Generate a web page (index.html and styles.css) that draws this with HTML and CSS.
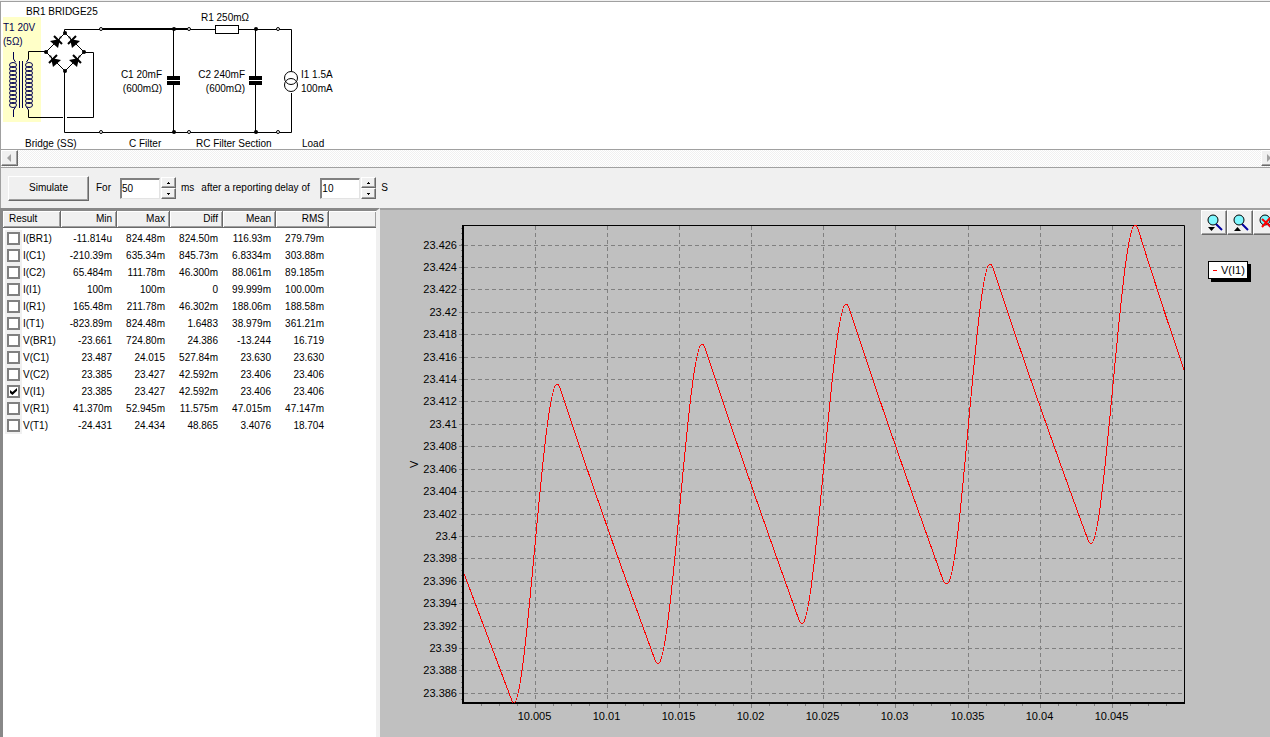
FILE: index.html
```html
<!DOCTYPE html>
<html lang="en">
<head>
<meta charset="utf-8">
<title>Power supply simulator</title>
<link rel="stylesheet" href="styles.css">
</head>
<body>
<main class="app">
  <section class="schematic" aria-label="Circuit">
    <svg class="circuit" width="345" height="147" viewBox="1 2 345 147">
      <rect class="pick" x="3" y="17" width="38" height="105"/>
      <g class="label">
        <text x="26" y="15">BR1 BRIDGE25</text>
        <text class="blue" x="3" y="31">T1 20V</text>
        <text class="blue" x="3" y="45">(5Ω)</text>
        <text x="201" y="21">R1 250mΩ</text>
        <text class="end" x="162" y="78">C1 20mF</text>
        <text class="end" x="162" y="92">(600mΩ)</text>
        <text class="end" x="245" y="78">C2 240mF</text>
        <text class="end" x="245" y="92">(600mΩ)</text>
        <text x="301" y="78">I1 1.5A</text>
        <text x="301" y="92">100mA</text>
        <text x="25" y="147">Bridge (SS)</text>
        <text x="129" y="147">C Filter</text>
        <text x="196" y="147">RC Filter Section</text>
        <text x="302" y="147">Load</text>
      </g>
      <g class="coil">
        <path d="M13.500 52v7l2 3M13.500 117v-7l2-3M28.500 59l-2 3M28.500 110l-2-3M19.500 61v47M22.500 61v47"/>
        <g id="left-coil">
          <ellipse cx="13" cy="65" rx="3.500" ry="2.500"/><ellipse cx="13" cy="69" rx="3.500" ry="2.500"/><ellipse cx="13" cy="73" rx="3.500" ry="2.500"/><ellipse cx="13" cy="77" rx="3.500" ry="2.500"/><ellipse cx="13" cy="81" rx="3.500" ry="2.500"/><ellipse cx="13" cy="85" rx="3.500" ry="2.500"/><ellipse cx="13" cy="89" rx="3.500" ry="2.500"/><ellipse cx="13" cy="93" rx="3.500" ry="2.500"/><ellipse cx="13" cy="97" rx="3.500" ry="2.500"/><ellipse cx="13" cy="101" rx="3.500" ry="2.500"/><ellipse cx="13" cy="105" rx="3.500" ry="2.500"/>
        </g>
        <use href="#left-coil" x="16"/>
      </g>
      <g class="wire">
        <path d="M28.500 59v-7.500H46M28.500 110v7.500H63M67 117.500H93.500V52.500H84M64.500 33V29.500H100M64.500 71V132.500H291.500V93M102 28.500H190M102 29.500H215M239 29.500H291.500V71M173.500 29v48M173.500 84v48M255.500 29v48M255.500 84v48"/>
        <path d="M65 33L46 52L65 71L84 52Z"/>
        <rect class="paper" x="215.500" y="25.500" width="23" height="8"/>
        <ellipse class="paper" cx="291" cy="78" rx="6.500" ry="6.500"/>
        <ellipse class="hollow" cx="291" cy="85" rx="6.500" ry="6.500"/>
        <circle class="paper" cx="101" cy="29" r="1.500"/><circle class="paper" cx="101" cy="132" r="1.500"/>
        <circle class="paper" cx="189" cy="29" r="1.500"/><circle class="paper" cx="189" cy="132" r="1.500"/>
        <circle class="paper" cx="278" cy="29" r="1.500"/><circle class="paper" cx="278" cy="132" r="1.500"/>
      </g>
      <g class="solid">
        <path d="M167 76h13v4h-13zM167 81h13v4h-13zM249 76h13v4h-13zM249 81h13v4h-13z"/>
        <circle cx="65" cy="33" r="2"/><circle cx="46" cy="52" r="2"/><circle cx="84" cy="52" r="2"/><circle cx="65" cy="71" r="2"/>
        <circle cx="174" cy="29" r="2"/><circle cx="174" cy="132" r="2"/><circle cx="256" cy="29" r="2"/><circle cx="256" cy="132" r="2"/>
        <g id="diode-a"><path d="M50 41l8 7 2-9z"/><path class="bar" d="M54 36l8 8M60 38l1-1"/></g>
        <use href="#diode-a" x="19" y="19"/>
        <g id="diode-b"><path d="M80 41l-8 7-2-9z"/><path class="bar" d="M76 36l-8 8M70 38l-1-1"/></g>
        <use href="#diode-b" x="-19" y="19"/>
      </g>
    </svg>
  </section>

  <div class="scrollbar">
    <button class="scroll-btn" aria-label="Scroll left"><svg width="5" height="8" viewBox="0 0 5 8"><path d="M4 0v8L0 4z"/></svg></button>
    <button class="scroll-btn scroll-right" aria-label="Scroll right"><svg width="5" height="8" viewBox="0 0 5 8"><path d="M0 0v8l4-4z"/></svg></button>
  </div>

  <form class="toolbar">
    <button class="simulate" type="button">Simulate</button>
    <label class="for" for="duration">For</label>
    <span class="spin">
      <input id="duration" type="text" value="50">
      <span class="steps">
        <button type="button" aria-label="Increase duration"><svg width="3" height="2" viewBox="0 0 3 2"><path d="M1 0h1v1h1v1H0V1h1z"/></svg></button>
        <button type="button" aria-label="Decrease duration"><svg width="3" height="2" viewBox="0 0 3 2"><path d="M0 0h3v1H2v1H1V1H0z"/></svg></button>
      </span>
    </span>
    <span class="unit">ms</span>
    <label class="delay" for="delay">after a reporting delay of</label>
    <span class="spin">
      <input id="delay" type="text" value="10">
      <span class="steps">
        <button type="button" aria-label="Increase delay"><svg width="3" height="2" viewBox="0 0 3 2"><path d="M1 0h1v1h1v1H0V1h1z"/></svg></button>
        <button type="button" aria-label="Decrease delay"><svg width="3" height="2" viewBox="0 0 3 2"><path d="M0 0h3v1H2v1H1V1H0z"/></svg></button>
      </span>
    </span>
    <span class="unit">S</span>
  </form>

  <div class="workspace">
    <section class="results" aria-label="Results">
      <table>
        <colgroup><col class="c-name"><col class="c-min"><col class="c-num"><col class="c-num"><col class="c-num"><col class="c-num"><col></colgroup>
        <thead><tr><th>Result</th><th>Min</th><th>Max</th><th>Diff</th><th>Mean</th><th>RMS</th><th></th></tr></thead>
        <tbody>
          <tr><td><label><input type="checkbox">I(BR1)</label></td><td>-11.814u</td><td>824.48m</td><td>824.50m</td><td>116.93m</td><td>279.79m</td><td></td></tr>
          <tr><td><label><input type="checkbox">I(C1)</label></td><td>-210.39m</td><td>635.34m</td><td>845.73m</td><td>6.8334m</td><td>303.88m</td><td></td></tr>
          <tr><td><label><input type="checkbox">I(C2)</label></td><td>65.484m</td><td>111.78m</td><td>46.300m</td><td>88.061m</td><td>89.185m</td><td></td></tr>
          <tr><td><label><input type="checkbox">I(I1)</label></td><td>100m</td><td>100m</td><td>0</td><td>99.999m</td><td>100.00m</td><td></td></tr>
          <tr><td><label><input type="checkbox">I(R1)</label></td><td>165.48m</td><td>211.78m</td><td>46.302m</td><td>188.06m</td><td>188.58m</td><td></td></tr>
          <tr><td><label><input type="checkbox">I(T1)</label></td><td>-823.89m</td><td>824.48m</td><td>1.6483</td><td>38.979m</td><td>361.21m</td><td></td></tr>
          <tr><td><label><input type="checkbox">V(BR1)</label></td><td>-23.661</td><td>724.80m</td><td>24.386</td><td>-13.244</td><td>16.719</td><td></td></tr>
          <tr><td><label><input type="checkbox">V(C1)</label></td><td>23.487</td><td>24.015</td><td>527.84m</td><td>23.630</td><td>23.630</td><td></td></tr>
          <tr><td><label><input type="checkbox">V(C2)</label></td><td>23.385</td><td>23.427</td><td>42.592m</td><td>23.406</td><td>23.406</td><td></td></tr>
          <tr><td><label><input type="checkbox" checked>V(I1)</label></td><td>23.385</td><td>23.427</td><td>42.592m</td><td>23.406</td><td>23.406</td><td></td></tr>
          <tr><td><label><input type="checkbox">V(R1)</label></td><td>41.370m</td><td>52.945m</td><td>11.575m</td><td>47.015m</td><td>47.147m</td><td></td></tr>
          <tr><td><label><input type="checkbox">V(T1)</label></td><td>-24.431</td><td>24.434</td><td>48.865</td><td>3.4076</td><td>18.704</td><td></td></tr>
        </tbody>
      </table>
    </section>

    <section class="graph" aria-label="Graph">
      <svg id="plot" class="plot" viewBox="380 210 820 527" preserveAspectRatio="xMinYMin meet">
        <defs><clipPath id="area"><rect x="464" y="225" width="720" height="478"/></clipPath></defs>
        <g id="grid" class="grid"></g>
        <path class="frame" d="M462 225.500H1184.500V703"/>
        <path class="base" d="M463 225V703H1185"/>
        <g id="ticks" class="ticks"></g>
        <g id="labels" class="axis"></g>
        <text class="axis" transform="translate(418 468) rotate(-90)">V</text>
        <path class="trace" clip-path="url(#area)" d="M463 571L509 693L512 701Q513 704 514 703C527 703 543 384 557 384Q559 384 561 391Q600 510 655 660Q657 664 658 664C672 664 688 344 702 344Q704 344 706 351Q745 470 799 620Q801 624 802 624C816 624 832 304 846 304Q848 304 850 311Q889 430 943 580Q945 584 947 584C961 584 976 264 990 264Q992 264 994 271Q1033 390 1088 540Q1090 544 1091 544C1105 544 1121 225 1135 225Q1137 225 1139 232Q1160 300 1184 370"/>
      </svg>
      <aside class="side">
        <div class="tools">
          <button aria-label="Zoom in"><svg width="18" height="18" viewBox="0 0 18 18"><path class="handle" d="M11 10l6 6"/><circle class="lens" cx="8" cy="6" r="5"/><path d="M3 13h7l-3.500 4z"/></svg></button>
          <button aria-label="Zoom out"><svg width="18" height="18" viewBox="0 0 18 18"><path class="handle" d="M11 10l6 6"/><circle class="lens" cx="8" cy="6" r="5"/><path d="M3 17h7l-3.500-4z"/></svg></button>
          <button aria-label="Cancel zoom"><svg width="18" height="18" viewBox="0 0 18 18"><path class="handle" d="M11 10l6 6"/><circle class="lens" cx="8" cy="6" r="5"/><path class="cross" d="M5 5l9 8M13 4l-8 9"/></svg></button>
        </div>
        <div class="legend"><span class="dash"></span>V(I1)</div>
      </aside>
    </section>
  </div>
</main>
<script src="chart.js"></script>
</body>
</html>
```
FILE: styles.css
```css
* { box-sizing: border-box; }
body {
  margin: 0;
  background: #f0f0f0;
  color: #000;
  font: 10px/14px "Liberation Sans", sans-serif;
  overflow: hidden;
}
button, input { font: inherit; color: inherit; }
button {
  display: flex;
  align-items: center;
  justify-content: center;
  padding: 0;
  background: #f0f0f0;
  border: 1px solid;
  border-color: #fff #696969 #696969 #fff;
  border-radius: 0;
  box-shadow: inset -1px -1px #a0a0a0;
}
.app { display: flex; flex-direction: column; min-height: 100vh; padding-top: 1px; }
.schematic {
  border: 1px solid #a0a0a0;
  border-right: 0;
  background: #fff;
}
.circuit { display: block; }
.pick { fill: #ffffc8; }
.label { font-size: 10px; }
.blue { fill: #000050; }
.end { text-anchor: end; }
.coil { fill: none; stroke: #000050; }
.wire { fill: none; stroke: #000; }
.wire .paper { fill: #fff; }
.hollow { fill: none; }
.bar { stroke: #000; stroke-width: 2; fill: none; }

.scrollbar {
  display: flex;
  justify-content: space-between;
  height: 17px;
  border-left: 1px solid #a0a0a0;
  background: repeating-conic-gradient(#f0f0f0 0 25%, #fff 0 50%) 0 0 / 2px 2px;
}
.scroll-btn { width: 17px; height: 16px; fill: #a0a0a0; }
.scroll-right { margin-right: -8px; }

.toolbar {
  display: flex;
  align-items: center;
  height: 41px;
  padding-left: 7px;
  border-left: 1px solid #a0a0a0;
  border-top: 1px solid #a0a0a0;
  white-space: nowrap;
}
.simulate { width: 81px; height: 25px; }
.for { width: 31px; padding-left: 7px; }
.spin { display: flex; align-items: center; }
.spin input {
  width: 40px;
  height: 21px;
  padding: 0 1px;
  border: 1px solid;
  border-color: #808080 #e3e3e3 #e3e3e3 #808080;
  box-shadow: inset 1px 1px #808080;
  background: #fff;
}
.steps { display: flex; flex-direction: column; padding-left: 1px; }
.steps button { width: 15px; height: 11px; }
.unit { padding-left: 5px; }
.delay { width: 126px; padding-left: 7px; }

.workspace { display: flex; flex: 1; }
.results {
  flex: none;
  width: 380px;
  border-top: 3px solid #888;
  border-left: 3px solid #888;
  border-right: 4px solid #f0f0f0;
  background: #fff;
}
table { width: 100%; border-collapse: separate; border-spacing: 0; table-layout: fixed; }
.c-name { width: 58px; }
.c-min { width: 56px; }
.c-num { width: 53px; }
th {
  height: 17px;
  padding: 0 4px;
  font-weight: normal;
  text-align: right;
  background: #f0f0f0;
  border-right: 1px solid #696969;
  border-bottom: 1px solid #696969;
  box-shadow: inset 1px 1px #fff, inset -1px -1px #a0a0a0;
}
th:first-child { text-align: left; padding-left: 6px; }
th:last-child { border-right: 0; }
tbody::before { content: ""; display: block; height: 2px; }
td { height: 17px; padding: 0 5px 0 0; text-align: right; white-space: nowrap; }
td:first-child { padding: 0 0 0 2px; text-align: left; }
td label { display: flex; align-items: center; gap: 3px; }
td input {
  appearance: none;
  display: grid;
  place-items: center;
  flex: none;
  width: 13px;
  height: 13px;
  margin: 0 0 0 2px;
  border: 2px solid #808080;
  background: #fff;
  box-shadow: 0 0 0 2px #f0f0f0;
}
td input:checked::before {
  content: "";
  width: 7px;
  height: 7px;
  background: #000;
  clip-path: polygon(0 30%, 35% 58%, 100% 0, 100% 38%, 35% 100%, 0 70%);
}

.graph {
  display: flex;
  flex: 1;
  min-width: 0;
  align-items: flex-start;
  border-top: 2px solid #a0a0a0;
  background: #c0c0c0;
}
.plot { display: block; flex: 1; min-width: 0; }
.grid { stroke: #808080; stroke-dasharray: 4 3; }
.ticks { stroke: #808080; }
.axis { font: 11px "Liberation Sans", sans-serif; }
.trace { fill: none; stroke: #f00; shape-rendering: crispEdges; }
.frame { fill: none; stroke: #000; }
.base { fill: none; stroke: #000; stroke-width: 2; }
.side { flex: none; width: 70px; overflow: hidden; }
.tools { display: flex; width: 79px; padding-left: 1px; }
.tools button { flex: none; width: 26px; height: 25px; }
.handle { stroke: #0000a0; stroke-width: 2; }
.lens { fill: #80f8ff; stroke: #000; }
.cross { stroke: #f00; stroke-width: 2; }
.legend {
  display: flex;
  align-items: center;
  gap: 4px;
  width: 40px;
  height: 18px;
  margin: 26px 0 8px 8px;
  padding-left: 4px;
  border: 1px solid #000;
  background: #fff;
  box-shadow: 3px 3px #000;
  font: 11px/16px "Liberation Sans", sans-serif;
}
.dash { width: 4px; height: 1px; margin-top: 1px; background: #f00; }
```
FILE: chart.js
```js
const NS = "http://www.w3.org/2000/svg";
const grid = document.getElementById("grid");
const ticks = document.getElementById("ticks");
const labels = document.getElementById("labels");

function line(parent, x1, y1, x2, y2) {
  const path = document.createElementNS(NS, "path");
  path.setAttribute("d", `M${x1} ${y1}L${x2} ${y2}`);
  parent.appendChild(path);
}

function label(x, y, anchor, value) {
  const text = document.createElementNS(NS, "text");
  text.setAttribute("x", x);
  text.setAttribute("y", y);
  text.setAttribute("text-anchor", anchor);
  text.textContent = value;
  labels.appendChild(text);
}

// Voltage axis: 2 mV per major division, four minor steps in each.
const stepY = 22.42;
for (let i = 0; i <= 20; i++) {
  const y = Math.floor(245 + i * stepY) + 0.5;
  line(grid, 464, y, 1184, y);
  line(ticks, 459, y, 462, y);
  label(457, y + 3.5, "end", String(Number((23.426 - i * 0.002).toFixed(3))));
}
for (let y = 245 - 3 * stepY / 4; y < 702; y += stepY / 4) {
  const row = Math.floor(y) + 0.5;
  line(ticks, 461, row, 462, row);
}

// Time axis: 5 ms per major division, four minor steps in each.
const stepX = 72.15;
for (let i = 1; i <= 9; i++) {
  const x = Math.floor(463 + i * stepX) + 0.5;
  line(grid, x, 226, x, 702);
  line(ticks, x, 704, x, 708);
  label(x - 1, 720, "middle", String(Number((10 + i * 0.005).toFixed(3))));
}
for (let i = 1; i < 40; i++) {
  const x = Math.floor(463 + i * stepX / 4) + 0.5;
  line(ticks, x, 704, x, 706);
}
```
